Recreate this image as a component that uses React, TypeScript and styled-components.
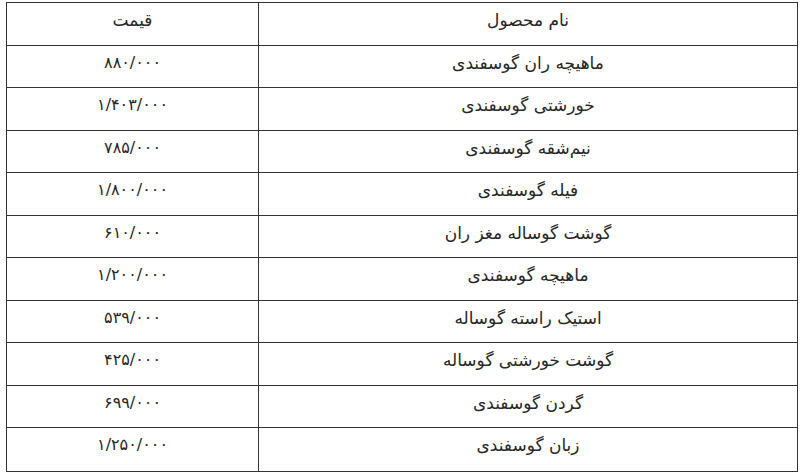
import { createGlobalStyle } from "styled-components"
import styled from "styled-components"

const GlobalStyle = createGlobalStyle`
  html, body {
    margin: 0;
    padding: 0;
    background: #fff;
  }
  body {
    font-family: "DejaVu Sans", "Noto Sans", sans-serif;
    color: #262626;
  }
`

const Page = styled.div`
  width: 800px;
  height: 474px;
  padding: 2px 2px 0 6px;
  box-sizing: border-box;
`

const Table = styled.div`
  direction: rtl;
  display: grid;
  grid-template-columns: 1fr 251px;
  grid-template-rows: repeat(11, 1fr);
  height: 470px;
  border: 1.5px solid #333;
  box-sizing: border-box;
`

interface CellProps {
  $last?: boolean
  $name?: boolean
}

const Cell = styled.div<CellProps>`
  display: flex;
  justify-content: center;
  align-items: flex-start;
  padding-top: 4px;
  border-bottom: ${({ $last }) => ($last ? "none" : "1.5px solid #333")};
  border-left: ${({ $name }) => ($name ? "1.5px solid #333" : "none")};
`

const Label = styled.span`
  font-size: 17px;
  line-height: 26px;
`

const Price = styled.span`
  direction: ltr;
  font-size: 16px;
  line-height: 26px;
  letter-spacing: 0.8px;
`

const rows = [
  { name: "ماهیچه ران گوسفندی", price: "۸۸۰/۰۰۰" },
  { name: "خورشتی گوسفندی", price: "۱/۴۰۳/۰۰۰" },
  { name: "نیم‌شقه گوسفندی", price: "۷۸۵/۰۰۰" },
  { name: "فیله گوسفندی", price: "۱/۸۰۰/۰۰۰" },
  { name: "گوشت گوساله مغز ران", price: "۶۱۰/۰۰۰" },
  { name: "ماهیچه گوسفندی", price: "۱/۲۰۰/۰۰۰" },
  { name: "استیک راسته گوساله", price: "۵۳۹/۰۰۰" },
  { name: "گوشت خورشتی گوساله", price: "۴۲۵/۰۰۰" },
  { name: "گردن گوسفندی", price: "۶۹۹/۰۰۰" },
  { name: "زبان گوسفندی", price: "۱/۲۵۰/۰۰۰" },
]

export default function App() {
  return (
    <Page>
      <GlobalStyle />
      <Table>
        <Cell $name>
          <Label>نام محصول</Label>
        </Cell>
        <Cell>
          <Label>قیمت</Label>
        </Cell>
        {rows.map((r, i) => {
          const last = i === rows.length - 1
          return [
            <Cell key={`n${i}`} $name $last={last}>
              <Label>{r.name}</Label>
            </Cell>,
            <Cell key={`p${i}`} $last={last}>
              <Price>{r.price}</Price>
            </Cell>,
          ]
        })}
      </Table>
    </Page>
  )
}
